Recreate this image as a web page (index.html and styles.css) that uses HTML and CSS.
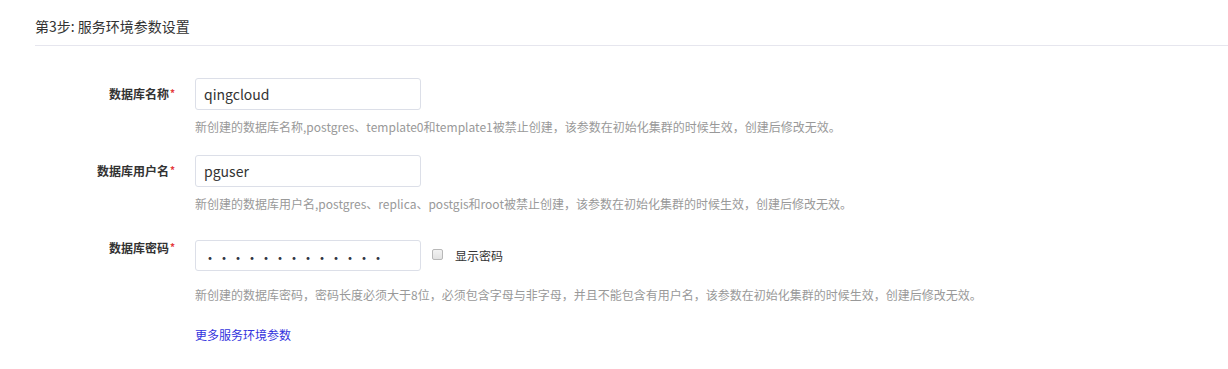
FILE: index.html
```html
<!DOCTYPE html>
<html lang="zh-CN">
<head>
<meta charset="utf-8">
<title>第3步: 服务环境参数设置</title>
<link rel="stylesheet" href="styles.css">
</head>
<body>
<div class="page">
  <div class="step-title">第3步: 服务环境参数设置</div>
  <div class="form">
    <div class="row row-name">
      <label class="label">数据库名称<span class="req">*</span></label>
      <div class="control">
        <input class="input" type="text" value="qingcloud">
        <div class="help">新创建的数据库名称,postgres、template0和template1被禁止创建，该参数在初始化集群的时候生效，创建后修改无效。</div>
      </div>
    </div>
    <div class="row row-user">
      <label class="label">数据库用户名<span class="req">*</span></label>
      <div class="control">
        <input class="input" type="text" value="pguser">
        <div class="help">新创建的数据库用户名,postgres、replica、postgis和root被禁止创建，该参数在初始化集群的时候生效，创建后修改无效。</div>
      </div>
    </div>
    <div class="row row-pass">
      <label class="label label-top">数据库密码<span class="req">*</span></label>
      <div class="control">
        <div class="inline">
          <input class="input input-pass" type="password" value="qingcloud1234">
          <label class="check"><span class="box"></span><span class="check-text">显示密码</span></label>
        </div>
        <div class="help help-pass">新创建的数据库密码，密码长度必须大于8位，必须包含字母与非字母，并且不能包含有用户名，该参数在初始化集群的时候生效，创建后修改无效。</div>
        <a class="more" href="#">更多服务环境参数</a>
      </div>
    </div>
  </div>
</div>
</body>
</html>
```
FILE: styles.css
```css
* { box-sizing: border-box; }
html, body { margin: 0; padding: 0; background: #fff; }
body {
  font-family: "Noto Sans CJK SC", "Noto Sans", sans-serif;
  color: #333;
  width: 1228px;
  height: 369px;
  overflow: hidden;
}
.page { padding-left: 35px; }
.step-title {
  font-size: 14px;
  line-height: 20px;
  padding-top: 16px;
  padding-bottom: 9px;
  color: #333;
  border-bottom: 1px solid #e6e6ee;
}
.form { padding-top: 32px; }
.row { display: flex; align-items: flex-start; }
.label {
  width: 140px;
  text-align: right;
  font-size: 12px;
  font-weight: bold;
  line-height: 32px;
  color: #333;
  flex: none;
}
.label-top { line-height: 16px; }
.req { color: #e4393c; font-size: 10px; position: relative; top: -2px; margin-left: 1px; }
.control { margin-left: 20px; display: flex; flex-direction: column; align-items: flex-start; }
.input {
  width: 226px;
  height: 32px;
  border: 1px solid #dcdfe8;
  border-radius: 3px;
  padding: 0 8px;
  font-family: inherit;
  font-size: 14px;
  color: #333;
  outline: none;
  background: #fff;
}
.input-pass {
  height: 31px;
  letter-spacing: 0;
  color: #334;
  padding-left: 7px;
  padding-top: 2px;
}
.help {
  font-size: 12px;
  line-height: 18px;
  color: #999;
  margin-top: 8px;
  white-space: nowrap;
}
.row-name { margin-bottom: 19px; }
.row-user { margin-bottom: 27px; }
.row-pass { margin-top: 4px; }
.help-pass { margin-top: 15px; }
.inline { display: flex; align-items: center; }
.check { display: flex; align-items: center; margin-left: 11px; font-size: 12px; color: #333; }
.box {
  width: 11px;
  height: 11px;
  border: 1px solid #b8b8b8;
  border-radius: 2px;
  background: linear-gradient(#f2f2f2, #e2e2e2);
  margin-right: 12px;
  margin-top: -2px;
}
.check-text { line-height: 16px; }
.more {
  font-size: 12px;
  line-height: 18px;
  margin-top: 22px;
  color: #3333dd;
  text-decoration: none;
}
```
